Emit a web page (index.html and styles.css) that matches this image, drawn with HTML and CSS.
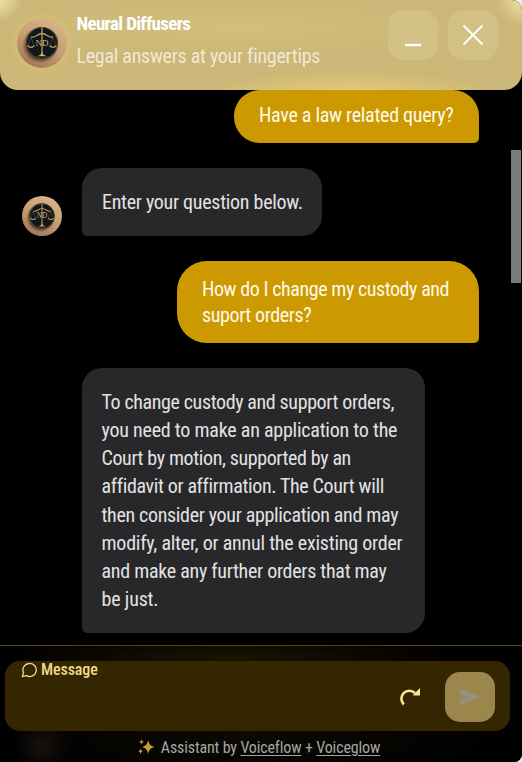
FILE: index.html
```html
<!DOCTYPE html>
<html lang="en">
<head>
<meta charset="utf-8">
<title>Neural Diffusers</title>
<link rel="stylesheet" href="styles.css">
</head>
<body>
<svg class="defs" width="0" height="0" aria-hidden="true">
  <defs>
    <linearGradient id="tan" x1="0.8" y1="0" x2="0.3" y2="1">
      <stop offset="0" stop-color="#dbb58c"/>
      <stop offset="0.55" stop-color="#c89d72"/>
      <stop offset="1" stop-color="#a0765a"/>
    </linearGradient>
    <radialGradient id="shade">
      <stop offset="0.75" stop-color="#3a2718" stop-opacity="0.75"/>
      <stop offset="1" stop-color="#5a3c25" stop-opacity="0"/>
    </radialGradient>
    <symbol id="logo" viewBox="0 0 50 50">
      <circle cx="25" cy="25" r="25" fill="url(#tan)"/>
      <circle cx="23.500" cy="27" r="18.500" fill="url(#shade)"/>
      <circle cx="25" cy="25" r="15.500" fill="#0e171e" stroke="#4c4028" stroke-width="1.200"/>
      <g fill="none" stroke="#c79a55" stroke-width="1.300" stroke-linecap="round">
        <path d="M25 10v27"/>
        <path d="M14.500 19c4 1 6-3.500 10.500-3.500s6.500 4.500 10.500 3.500"/>
        <path d="M14 19.500l-3 8M14 19.500l3 8M36 19.500l-3 8M36 19.500l3 8" stroke-width="0.600" stroke="#665435"/>
        <path d="M11 28c1.500 1.700 4.500 1.700 6 0M33 28c1.500 1.700 4.500 1.700 6 0"/>
      </g>
      <path d="M25 33c0 3-2 4.500-5 5.200h10c-3-.7-5-2.200-5-5.200z" fill="#d9ac63"/>
      <text class="monogram" x="25" y="27.500" text-anchor="middle">ND</text>
    </symbol>
  </defs>
</svg>
<main class="widget">
  <header class="header">
    <svg class="header-logo"><use href="#logo"/></svg>
    <div class="heading">
      <h1 class="title">Neural Diffusers</h1>
      <p class="subtitle">Legal answers at your fingertips</p>
    </div>
    <div class="actions">
      <button class="action" aria-label="Minimize"><svg width="50" height="50" viewBox="0 0 50 50"><path d="M17 35h16" stroke="#fff" stroke-width="2.400"/></svg></button>
      <button class="action" aria-label="Close"><svg width="50" height="50" viewBox="0 0 50 50"><path d="M15.500 15.500l19 19M34.500 15.500l-19 19" stroke="#fff" stroke-width="2"/></svg></button>
    </div>
  </header>

  <section class="chat">
    <div class="messages">
      <div class="bubble user first"><span class="line s28">Have a law related query?</span></div>
      <div class="row">
        <svg class="avatar"><use href="#logo"/></svg>
        <div class="bubble bot"><span class="line s28">Enter your question below.</span></div>
      </div>
      <div class="bubble user wide">
        <span class="line s43">How do I change my custody and</span>
        <span class="line s38">suport orders?</span>
      </div>
      <div class="bubble bot answer">
        <span class="line s38">To change custody and support orders,</span>
        <span class="line s23">you need to make an application to the</span>
        <span class="line s38">Court by motion, supported by an</span>
        <span class="line s36">affidavit or affirmation. The Court will</span>
        <span class="line s33">then consider your application and may</span>
        <span class="line s23">modify, alter, or annul the existing order</span>
        <span class="line s28">and make any further orders that may</span>
        <span class="line s17">be just.</span>
      </div>
    </div>
    <div class="scrollbar"><div class="thumb"></div></div>
  </section>

  <footer class="footer">
    <div class="composer">
      <div class="placeholder">
        <svg width="16" height="16" viewBox="0 0 24 24" fill="none" stroke="#f1d98a" stroke-width="2" stroke-linejoin="round"><path d="M2 22l1.800-6A10 9.800 0 1 1 8 20.500z"/></svg>
        <span>Message</span>
      </div>
      <div class="tools">
        <svg width="22" height="20" viewBox="0 0 22 20"><path d="M4.800 17.500A8 8 0 0 1 16 6" fill="none" stroke="#ffe294" stroke-width="2.600"/><path d="M21 1v7.500h-7.500z" fill="#ffe294"/></svg>
        <button class="send" aria-label="Send"><svg width="50" height="50" viewBox="0 0 50 50"><path d="M15.500 17v6l10 2-10 2v6.500L35 25z" fill="#999080"/></svg></button>
      </div>
    </div>
    <p class="credit">
      <svg width="17" height="17" viewBox="0 0 17 17" fill="#c79a35"><path d="M10.200 1c.9 4 2.300 6 6.300 7-4 1-5.400 3-6.300 7C9.300 11 8 9 4 8c4-1 5.300-3 6.200-7zM3.500 0.300c.4 1.700.9 2.300 2.500 2.700-1.600.4-2.100 1-2.500 2.700C3.100 4 2.600 3.400 1 3c1.600-.4 2.100-1 2.500-2.700zM2.600 9.300c.4 2 1 2.600 2.600 3-1.600.4-2.200 1-2.600 3-.4-2-1-2.600-2.600-3 1.600-.4 2.200-1 2.600-3z"/></svg>
      <span>Assistant by <a href="#">Voiceflow</a> + <a href="#">Voiceglow</a></span>
    </p>
  </footer>
</main>
</body>
</html>
```
FILE: styles.css
```css
* { box-sizing: border-box; }
html { background: #eee; }
body {
  margin: 0;
  font-family: Roboto, "Liberation Sans", sans-serif;
  font-stretch: 75%;
  font-size: 20px;
}
h1, p { margin: 0; }
button { border: 0; padding: 0; }
svg { display: block; flex: none; }
.defs { position: absolute; }
.monogram { font: 9px "Liberation Serif", serif; fill: #d8b276; }

.widget {
  display: grid;
  grid-template-rows: 90px 555px 117px;
  height: 762px;
  background: #000;
  border-radius: 0 10px 8px 0;
  overflow: hidden;
}

.header {
  position: relative;
  z-index: 1;
  display: flex;
  padding: 10px 24px 0 17px;
  border-radius: 0 0 18px 18px;
  background:
    radial-gradient(ellipse 150px 24px at 350px 94px, #ecd078cc, #ecd07800),
    radial-gradient(circle 22px at 0 0, #efe0a0, #efe0a000),
    radial-gradient(circle 26px at 100% 0, #efe0a0, #efe0a000),
    radial-gradient(ellipse 240px 26px at 240px 28px, #d5c17cdd, #d5c17c00),
    #cbb777;
}
.header-logo {
  width: 50px;
  height: 50px;
  margin-top: 8px;
  border-radius: 50%;
  box-shadow: 0 0 12px #dcc47d;
}
.heading { margin-left: 9px; padding-left: 0.500px; color: #fff; white-space: nowrap; }
.title { font-size: 19px; font-weight: 700; line-height: 28px; letter-spacing: -0.650px; }
.subtitle { line-height: 28px; margin-top: 4px; letter-spacing: -0.280px; color: #f1e9d2; }
.actions { display: flex; gap: 10px; margin-left: auto; }
.action { width: 50px; height: 50px; border-radius: 15px; background: #d3c085; }

.chat { display: flex; justify-content: space-between; min-height: 0; }
.messages {
  display: flex;
  flex-direction: column;
  gap: 25px;
  width: 479px;
  padding-left: 22px;
}
.bubble { flex: none; }
.line { display: block; white-space: nowrap; }
.user {
  align-self: flex-end;
  width: 245px;
  padding: 15px 25px;
  border-radius: 30px 30px 5px 30px;
  background: #cc9900;
  color: #fff9e8;
  line-height: 26px;
}
.first { height: 53px; padding-top: 12px; border-radius: 26px 26px 5px 26px; }
.wide { width: 302px; }
.row { display: flex; align-items: flex-end; gap: 20px; }
.avatar { width: 40px; height: 40px; }
.bot {
  width: 240px;
  padding: 20px;
  border-radius: 20px 20px 20px 5px;
  background: #28282a;
  color: #e2e2e2;
  line-height: 28px;
}
.answer { width: 343px; margin-left: 60px; padding-left: 19.500px; line-height: 28.125px; }
.s17 { letter-spacing: -0.170px; }
.s23 { letter-spacing: -0.230px; }
.s28 { letter-spacing: -0.280px; }
.s33 { letter-spacing: -0.330px; }
.s36 { letter-spacing: -0.360px; }
.s38 { letter-spacing: -0.380px; }
.s43 { letter-spacing: -0.430px; }
.scrollbar { width: 11px; padding-top: 60px; }
.thumb { width: 10px; height: 133px; background: #7b7b7b; }

.footer {
  padding: 15px 12px 0 5px;
  border-top: 1px solid #5f4700;
  background:
    radial-gradient(ellipse 230px 24px at 230px 12px, #1a1400, #1a140000),
    radial-gradient(circle 28px at 42px 100px, #17120e, #17120e00),
    radial-gradient(ellipse 260px 50px at 250px 90px, #0c0a04, #0c0a0400),
    #000;
}
.composer {
  display: flex;
  justify-content: space-between;
  height: 70px;
  padding: 0 15px 0 16px;
  border-radius: 15px;
  background: #332600;
}
.placeholder {
  display: flex;
  gap: 4px;
  height: 17px;
  align-items: center;
  font-size: 16px;
  font-weight: 500;
  letter-spacing: -0.100px;
  color: #f1d98a;
}
.tools { display: flex; align-items: center; gap: 24px; padding-top: 2px; }
.send { width: 50px; height: 50px; border-radius: 15px; background: #9b874c; }
.credit {
  display: flex;
  justify-content: center;
  gap: 6px;
  margin: 8px 0 0 3px;
  font-size: 16px;
  line-height: 18px;
  letter-spacing: -0.150px;
  color: #a5a5a3;
}
.credit a { color: inherit; text-underline-offset: 2px; }
```
